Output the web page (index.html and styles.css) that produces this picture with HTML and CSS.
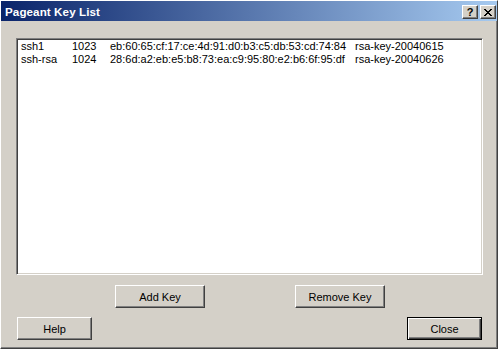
FILE: index.html
```html
<!DOCTYPE html>
<html lang="en">
<head>
    <meta charset="UTF-8">
    <title>Pageant Key List</title>
    <link rel="stylesheet" href="styles.css">
</head>
<body>
    <div class="window">
        <div class="titlebar">
            <span class="title">Pageant Key List</span>
            <div class="caption-btns">
                <div class="cap-btn help-cap">?</div>
                <div class="cap-btn close-cap">
                    <svg width="8" height="7" viewBox="0 0 8 7">
                        <path d="M0 0h2v1h-2zM6 0h2v1h-2zM1 1h2v1h-2zM5 1h2v1h-2zM2 2h4v1h-4zM3 3h2v1h-2zM2 4h4v1h-4zM1 5h2v1h-2zM5 5h2v1h-2zM0 6h2v1h-2zM6 6h2v1h-2z" fill="#000"/>
                    </svg>
                </div>
            </div>
        </div>

        <div class="content">
            <div class="listbox">
                <div class="row">
                    <span>ssh1</span>
                    <span>1023</span>
                    <span>eb:60:65:cf:17:ce:4d:91:d0:b3:c5:db:53:cd:74:84</span>
                    <span>rsa-key-20040615</span>
                </div>
                <div class="row">
                    <span>ssh-rsa</span>
                    <span>1024</span>
                    <span>28:6d:a2:eb:e5:b8:73:ea:c9:95:80:e2:b6:6f:95:df</span>
                    <span>rsa-key-20040626</span>
                </div>
            </div>

            <div class="key-btns">
                <button class="btn wide">Add Key</button>
                <button class="btn wide">Remove Key</button>
            </div>

            <div class="bottom-btns">
                <button class="btn">Help</button>
                <button class="btn default">Close</button>
            </div>
        </div>
    </div>
</body>
</html>
```

FILE: styles.css
```css
html, body{
    margin: 0;
    padding: 0;
    background: #d4d0c8;
}
.window{
    width: 498px;
    height: 349px;
    box-sizing: border-box;
    background: #d4d0c8;
    border-top: 1px solid #fff;
    border-left: 1px solid #fff;
    border-right: 1px solid #404040;
    border-bottom: 1px solid #404040;
    box-shadow: inset -1px -1px 0 #808080;
    display: flex;
    flex-direction: column;
    font-family: "Liberation Sans", Arial, sans-serif;
    font-size: 11px;
    color: #000;
}
.titlebar{
    height: 20px;
    flex: none;
    display: flex;
    align-items: center;
    justify-content: space-between;
    background: linear-gradient(to right, #0a246a, #a6caf0);
    padding-left: 4px;
}
.title{
    color: #fff;
    font-weight: bold;
    font-size: 11.6px;
    letter-spacing: 0.1px;
}
.caption-btns{
    display: flex;
    gap: 2px;
    margin-right: 1px;
    margin-top: 2px;
}
.cap-btn{
    width: 16px;
    height: 14px;
    box-sizing: border-box;
    background: #d4d0c8;
    border-top: 1px solid #fff;
    border-left: 1px solid #fff;
    border-right: 1px solid #404040;
    border-bottom: 1px solid #404040;
    box-shadow: inset -1px -1px 0 #808080;
    display: flex;
    align-items: center;
    justify-content: center;
}
.help-cap{
    font-weight: bold;
    font-size: 11px;
    line-height: 12px;
    padding-bottom: 1px;
}
.close-cap svg{
    display: block;
    margin-left: -1px;
}
.content{
    flex: 1;
    display: flex;
    flex-direction: column;
    padding: 17px 14px 0 15px;
}
.listbox{
    height: 237px;
    box-sizing: border-box;
    background: #fff;
    border-top: 1px solid #808080;
    border-left: 1px solid #808080;
    border-right: 1px solid #fff;
    border-bottom: 1px solid #fff;
    box-shadow: inset 1px 1px 0 #404040, inset -1px -1px 0 #d4d0c8;
    padding: 1px 0 0 4px;
}
.row{
    display: grid;
    grid-template-columns: 51px 38px 245px auto;
    height: 13px;
    line-height: 13px;
    white-space: nowrap;
}
.btn{
    height: 23px;
    width: 75px;
    box-sizing: border-box;
    background: #d4d0c8;
    border-top: 1px solid #fff;
    border-left: 1px solid #fff;
    border-right: 1px solid #404040;
    border-bottom: 1px solid #404040;
    box-shadow: inset -1px -1px 0 #808080;
    font-family: "Liberation Sans", Arial, sans-serif;
    font-size: 11px;
    color: #000;
    padding: 0;
}
.btn.wide{
    width: 90px;
}
.btn.default{
    border: 1px solid #000;
    box-shadow: inset 1px 1px 0 #fff, inset -1px -1px 0 #404040, inset -2px -2px 0 #808080;
}
.key-btns{
    display: flex;
    gap: 90px;
    margin-top: 10px;
    padding-left: 99px;
}
.bottom-btns{
    display: flex;
    justify-content: space-between;
    margin-top: 9px;
    padding-left: 1px;
    padding-right: 1px;
}
```
